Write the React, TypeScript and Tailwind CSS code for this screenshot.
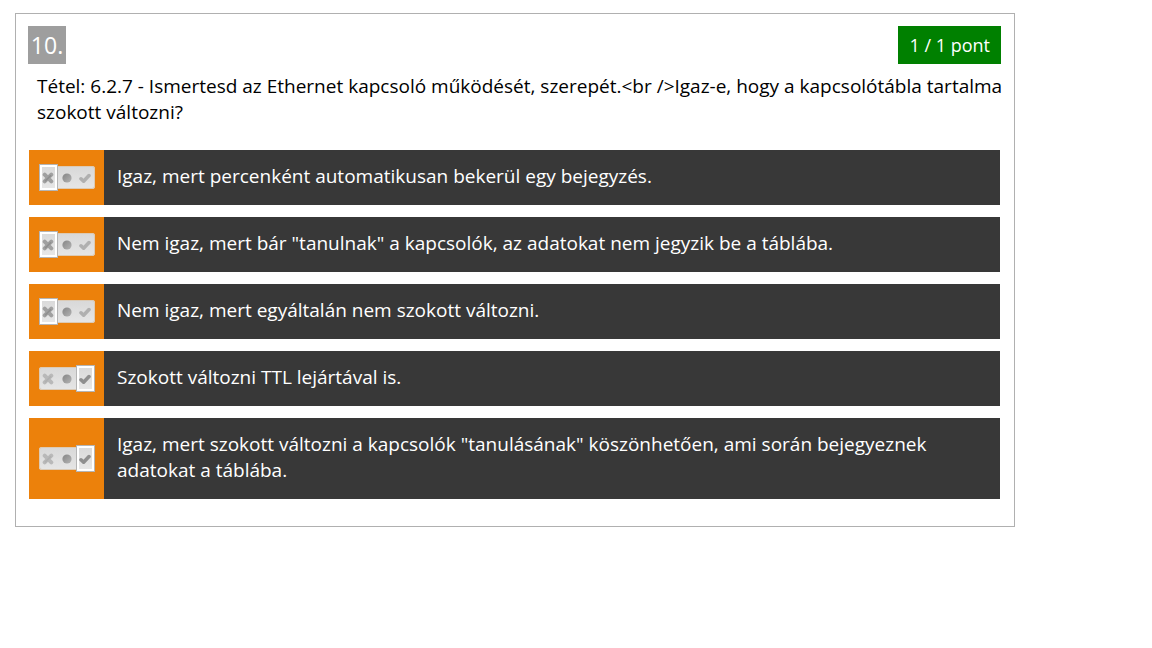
import React, { useState } from "react";

type Mark = "false" | "unknown" | "true";

const answers: { text: string; mark: Mark }[] = [
  { text: "Igaz, mert percenként automatikusan bekerül egy bejegyzés.", mark: "false" },
  { text: 'Nem igaz, mert bár "tanulnak" a kapcsolók, az adatokat nem jegyzik be a táblába.', mark: "false" },
  { text: "Nem igaz, mert egyáltalán nem szokott változni.", mark: "false" },
  { text: "Szokott változni TTL lejártával is.", mark: "true" },
  {
    text: 'Igaz, mert szokott változni a kapcsolók "tanulásának" köszönhetően, ami során bejegyeznek adatokat a táblába.',
    mark: "true",
  },
];

const marks: { value: Mark; label: string }[] = [
  { value: "false", label: "Hamis" },
  { value: "unknown", label: "Nem tudom" },
  { value: "true", label: "Igaz" },
];

function MarkIcon({ value, active }: { value: Mark; active: boolean }) {
  if (value === "unknown") {
    return (
      <svg viewBox="0 0 12 12" className="size-3" aria-hidden="true">
        <defs>
          <linearGradient id="dot" x1="0" y1="0" x2="1" y2="1">
            <stop offset="0" stopColor="#858585" />
            <stop offset="1" stopColor="#b4b4b4" />
          </linearGradient>
        </defs>
        <circle cx="6" cy="6" r="4.6" fill="url(#dot)" />
      </svg>
    );
  }
  if (value === "false") {
    return (
      <svg viewBox="0 0 12 12" className="size-3" fill="none" stroke={active ? "#a0a0a0" : "#b9b9b9"} aria-hidden="true">
        <path d="M2.7 2.7L9.3 9.3M9.3 2.7L2.7 9.3" strokeWidth="4" strokeLinecap="round" />
        <path d="M3 9.2L9 3.2" stroke={active ? "#8e8e8e" : "#b0b0b0"} strokeWidth="1.6" />
      </svg>
    );
  }
  return (
    <svg viewBox="0 0 12 12" className="size-3" fill="none" stroke={active ? "#8f8f8f" : "#b0b0b0"} aria-hidden="true">
      <path d="M2 6.8L4.6 9.2L10 3.6" strokeWidth="3.6" strokeLinecap="round" strokeLinejoin="round" />
    </svg>
  );
}

function Toggle({ name, legend, initial }: { name: string; legend: string; initial: Mark }) {
  const [mark, setMark] = useState<Mark>(initial);
  return (
    <fieldset
      aria-label={legend}
      className="grid h-[23px] w-14 grid-cols-[19px_18px_19px] items-center justify-items-center rounded-[3px] bg-linear-to-b from-[#d8d8d8] to-[#e6e6e6] ring-1 ring-[#dccab4] ring-inset"
    >
      {marks.map(({ value, label }) => (
        <label
          key={value}
          className={
            mark === value
              ? "relative -my-0.5 flex h-[27px] w-full cursor-pointer items-center justify-center border border-[#b5b5b5] bg-linear-to-b from-[#d9d9d9] to-[#e8e8e8] ring-2 ring-white ring-inset"
              : "relative flex h-[23px] w-full cursor-pointer items-center justify-center"
          }
        >
          <input
            type="radio"
            name={name}
            value={value}
            checked={mark === value}
            onChange={() => setMark(value)}
            aria-label={label}
            className="sr-only"
          />
          <MarkIcon value={value} active={mark === value} />
        </label>
      ))}
    </fieldset>
  );
}

export default function App() {
  return (
    <main className="px-[15px] py-[13px] font-['Open_Sans',sans-serif] text-[19px] leading-[26px] text-black">
      <section className="w-full max-w-[1000px] border border-[#b0b0b0] bg-white pt-3 pr-[13px] pb-[27px] pl-3">
        <header className="flex items-center justify-between">
          <h1 className="flex size-[38px] items-center justify-center bg-[#9e9e9e] text-[23px] text-white">10.</h1>
          <p className="flex h-[38px] items-center bg-[#008000] px-[11px] text-lg text-white">1 / 1 pont</p>
        </header>
        <p className="-mr-[10px] pt-[9px] pl-[9px]">
          {"Tétel: 6.2.7 - Ismertesd az Ethernet kapcsoló működését, szerepét.<br />Igaz-e, hogy a kapcsolótábla tartalma szokott változni?"}
        </p>
        <ul className="mt-[25px] flex flex-col gap-3 px-px">
          {answers.map((answer, index) => (
            <li key={answer.text} className="flex bg-[#383838] text-white">
              <div className="flex w-[75px] shrink-0 items-center justify-center bg-[#ec810b]">
                <Toggle name={`answer-${index}`} legend={answer.text} initial={answer.mark} />
              </div>
              <p className="grow px-[13px] pt-[13px] pb-4">{answer.text}</p>
            </li>
          ))}
        </ul>
      </section>
    </main>
  );
}
